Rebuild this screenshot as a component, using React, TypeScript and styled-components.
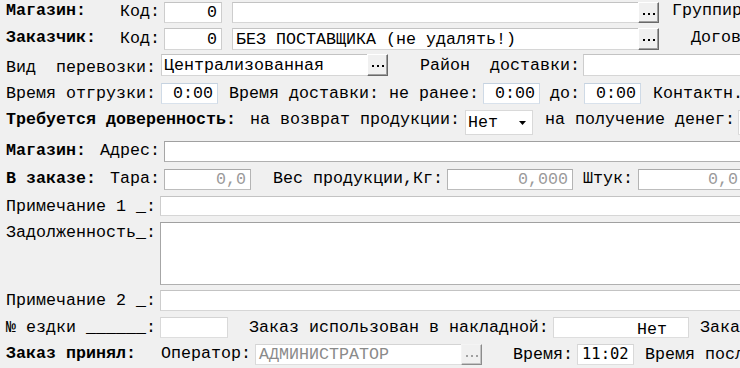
import React from "react";
import styled, { createGlobalStyle } from "styled-components";

const Global = createGlobalStyle`
  html, body { margin: 0; padding: 0; background: #f0f0f0; }
  body {
    width: 740px; height: 368px; overflow: hidden;
    font-family: "Courier New", "Nimbus Mono PS", "FreeMono", "Liberation Mono", monospace;
    font-size: 16.67px; color: #000;
  }
  #root { width: 740px; height: 368px; }
`;

const Form = styled.div`
  display: flex;
  flex-direction: column;
  box-sizing: border-box;
  width: 740px;
  height: 368px;
  padding: 2px 0 0 6px;
  overflow: hidden;
`;

const Row = styled.div<{ $mt?: number; $h?: number; $align?: string }>`
  display: flex;
  flex: none;
  align-items: ${(p) => p.$align ?? "center"};
  height: ${(p) => p.$h ?? 21}px;
  margin-top: ${(p) => p.$mt ?? 0}px;
  white-space: pre;
`;

const Label = styled.span<{ $w?: number; $ml?: number; $bold?: boolean; $dy?: number }>`
  flex: none;
  display: block;
  width: ${(p) => (p.$w ? `${p.$w}px` : "auto")};
  margin-left: ${(p) => p.$ml ?? 0}px;
  font-weight: ${(p) => (p.$bold ? 700 : 400)};
  line-height: 17px;
  padding-top: ${(p) => (p.$dy && p.$dy > 0 ? p.$dy * 2 : 0)}px;
  padding-bottom: ${(p) => (p.$dy && p.$dy < 0 ? -p.$dy * 2 : 0)}px;
`;

const tones: Record<string, string> = {
  soft: "#c3c3c3 #cdcdcd #d6d6d6 #cdcdcd",
  plain: "#a9a9a9 #b4b4b4 #bdbdbd #b4b4b4",
  dark: "#a0a0a0 #a6a6a6 #b0b0b0 #a6a6a6",
  blue: "#c5d2e0 #cfdae6 #d9e2ec #cfdae6",
  light: "#d4d4d4 #d9d9d9 #dedede #d9d9d9",
};

const Field = styled.div<{
  $w: number;
  $ml?: number;
  $align?: "left" | "right";
  $muted?: boolean;
  $tone?: keyof typeof tones;
  $pl?: number;
  $pr?: number;
  $top?: boolean;
}>`
  flex: none;
  box-sizing: border-box;
  width: ${(p) => p.$w}px;
  height: 100%;
  margin-left: ${(p) => p.$ml ?? 0}px;
  background: #fff;
  border: 1px solid;
  border-color: ${(p) => tones[p.$tone ?? "soft"]};
  display: flex;
  align-items: ${(p) => (p.$top ? "flex-start" : "center")};
  justify-content: ${(p) => (p.$align === "right" ? "flex-end" : "flex-start")};
  padding: 0 ${(p) => p.$pr ?? 4}px 0 ${(p) => p.$pl ?? 2}px;
  color: ${(p) => (p.$muted ? "#9a9a9a" : "#000")};
  line-height: 17px;
  overflow: hidden;
`;

const LowText = styled.span`
  margin-top: 3px;
`;

const ClockText = styled.span`
  font-family: "DejaVu Sans Mono", monospace;
  font-size: 15.5px;
`;

const Lookup = styled.div<{ $w: number; $ml?: number; $disabled?: boolean }>`
  flex: none;
  display: flex;
  width: ${(p) => p.$w}px;
  height: 100%;
  margin-left: ${(p) => p.$ml ?? 0}px;
  color: ${(p) => (p.$disabled ? "#8a8a8a" : "#000")};
`;

const LookupText = styled.div<{ $pl?: number; $tone?: keyof typeof tones }>`
  flex: 1;
  min-width: 0;
  box-sizing: border-box;
  background: #fff;
  border: 1px solid;
  border-right: none;
  border-color: ${(p) => tones[p.$tone ?? "soft"]};
  display: flex;
  align-items: center;
  padding-left: ${(p) => p.$pl ?? 2}px;
  line-height: 17px;
  overflow: hidden;
`;

const EllipsisButton = styled.button<{ $disabled?: boolean }>`
  flex: none;
  box-sizing: border-box;
  width: 21px;
  height: 100%;
  margin: 0;
  padding: 2px 0 0 0;
  background: #f0f0f0;
  border: 1px solid;
  border-color: ${(p) => (p.$disabled ? "#f4f4f4 #8c8c8c #8c8c8c #f4f4f4" : "#ffffff #696969 #696969 #ffffff")};
  box-shadow: inset -1px -1px 0 ${(p) => (p.$disabled ? "#c4c4c4" : "#a0a0a0")};
  display: flex;
  align-items: center;
  justify-content: center;
  color: ${(p) => (p.$disabled ? "#a0a0a0" : "#000")};
`;

const SelectBox = styled.div<{ $w: number }>`
  flex: none;
  box-sizing: border-box;
  width: ${(p) => p.$w}px;
  height: 100%;
  background: #fff;
  border: 1px solid #d9d9d9;
  display: flex;
  align-items: center;
  justify-content: space-between;
  padding: 0 6px 0 2px;
  line-height: 17px;
`;

const Dots = () => (
  <svg width="12" height="2" viewBox="0 0 12 2" fill="currentColor">
    <rect x="0" y="0" width="2" height="2" />
    <rect x="5" y="0" width="2" height="2" />
    <rect x="10" y="0" width="2" height="2" />
  </svg>
);

const Caret = () => (
  <svg width="7" height="4" viewBox="0 0 7 4" fill="#000">
    <polygon points="0,0 7,0 3.5,4" />
  </svg>
);

export default function App() {
  return (
    <>
      <Global />
      <Form>
        <Row $h={21}>
          <Label $w={114} $bold $dy={-2}>Магазин:</Label>
          <Label $w={44} $dy={-1}>Код:</Label>
          <Field $w={58} $align="right">0</Field>
          <Lookup $w={427} $ml={10}>
            <LookupText />
            <EllipsisButton><Dots /></EllipsisButton>
          </Lookup>
          <Label $ml={13} $dy={-2}>Группировка:</Label>
        </Row>

        <Row $mt={5} $h={22}>
          <Label $w={114} $bold $dy={-2}>Заказчик:</Label>
          <Label $w={44} $dy={-1}>Код:</Label>
          <Field $w={58} $align="right">0</Field>
          <Lookup $w={427} $ml={10}>
            <LookupText $pl={3}>БЕЗ ПОСТАВЩИКА (не удалять!)</LookupText>
            <EllipsisButton><Dots /></EllipsisButton>
          </Lookup>
          <Label $ml={32} $dy={-2}>Договор:</Label>
        </Row>

        <Row $mt={4} $h={22}>
          <Label $w={155} $dy={2}>Вид  перевозки:</Label>
          <Lookup $w={227}>
            <LookupText $pl={2}>Централизованная</LookupText>
            <EllipsisButton><Dots /></EllipsisButton>
          </Lookup>
          <Label $w={163} $ml={32}>Район  доставки:</Label>
          <Field $w={200} />
        </Row>

        <Row $mt={7} $h={21}>
          <Label $w={155}>Время отгрузки:</Label>
          <Field $w={57} $align="right" $tone="blue">0:00</Field>
          <Label $w={254} $ml={11}>Время доставки: не ранее:</Label>
          <Field $w={57} $align="right" $tone="blue">0:00</Field>
          <Label $w={34} $ml={10}>до:</Label>
          <Field $w={57} $align="right" $tone="blue">0:00</Field>
          <Label $ml={12}>Контактн. лицо:</Label>
        </Row>

        <Row $mt={6} $h={25}>
          <Label $w={244} $bold $dy={-3}>Требуется доверенность:</Label>
          <Label $w={215} $dy={-3}>на возврат продукции:</Label>
          <SelectBox $w={68}>
            <span>Нет</span>
            <Caret />
          </SelectBox>
          <Label $w={193} $ml={12} $dy={-3}>на получение денег:</Label>
          <Field $w={60} $tone="light" />
        </Row>

        <Row $mt={6} $h={21}>
          <Label $w={94} $bold $dy={-1}>Магазин:</Label>
          <Label $w={64} $dy={-1}>Адрес:</Label>
          <Field $w={600} $tone="dark" />
        </Row>

        <Row $mt={7} $h={21}>
          <Label $w={104} $bold $dy={-1}>В заказе:</Label>
          <Label $w={54} $dy={-1}>Тара:</Label>
          <Field $w={87} $align="right" $muted $tone="plain">0,0</Field>
          <Label $w={174} $ml={22} $dy={-1}>Вес продукции,Кг:</Label>
          <Field $w={126} $align="right" $muted $tone="plain">0,000</Field>
          <Label $w={55} $ml={10} $dy={-1}>Штук:</Label>
          <Field $w={120} $align="right" $muted $tone="plain" $pr={19}>0,0</Field>
        </Row>

        <Row $mt={6} $h={20}>
          <Label $w={154}>Примечание 1 _:</Label>
          <Field $w={600} $tone="soft" />
        </Row>

        <Row $mt={6} $h={63} $align="flex-start">
          <Label $w={154} $dy={1}>Задолженность_:</Label>
          <Field $w={600} $tone="dark" $top />
        </Row>

        <Row $mt={5} $h={21}>
          <Label $w={154}>Примечание 2 _:</Label>
          <Field $w={600} $tone="soft" />
        </Row>

        <Row $mt={6} $h={21}>
          <Label $w={154}>№ ездки ______:</Label>
          <Field $w={68} $tone="light" />
          <Label $w={304} $ml={21}>Заказ использован в накладной:</Label>
          <Field $w={136} $tone="light" $pl={83}>
            <LowText>Нет</LowText>
          </Field>
          <Label $ml={11}>Заказ оплачен:</Label>
        </Row>

        <Row $mt={6} $h={21}>
          <Label $w={155} $bold $dy={-1}>Заказ принял:</Label>
          <Label $w={94} $dy={-1}>Оператор:</Label>
          <Lookup $w={227} $disabled>
            <LookupText $pl={3} $tone="light">АДМИНИСТРАТОР</LookupText>
            <EllipsisButton $disabled><Dots /></EllipsisButton>
          </Lookup>
          <Label $w={64} $ml={31}>Время:</Label>
          <Field $w={57} $tone="light" $pl={4}>
            <ClockText>11:02</ClockText>
          </Field>
          <Label $ml={11}>Время последнего изменения:</Label>
        </Row>
      </Form>
    </>
  );
}
